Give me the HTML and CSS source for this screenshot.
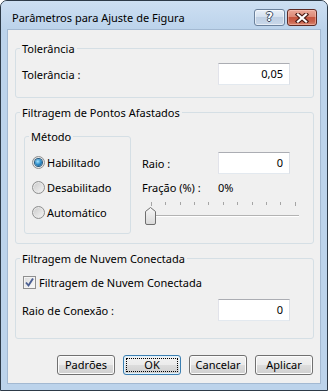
FILE: index.html
```html
<!DOCTYPE html>
<html>
<head>
	<title>Parâmetros para Ajuste de Figura</title>
	<link rel="stylesheet" href="styles.css">
</head>
<body>
	<div class="window">
		<div class="titlebar">
			<span class="title">Parâmetros para Ajuste de Figura</span>
			<div class="caption-buttons">
				<div class="cap-btn help"><span>?</span></div>
				<div class="cap-btn close">
					<svg width="14" height="10" viewBox="0 0 14 10">
						<path d="M3 1.5 L11 8.5 M11 1.5 L3 8.5" stroke="#4a1c16" stroke-width="4.4" stroke-linecap="square"/>
						<path d="M3 1.5 L11 8.5 M11 1.5 L3 8.5" stroke="#fff" stroke-width="2.2" stroke-linecap="square"/>
					</svg>
				</div>
			</div>
		</div>

		<div class="client">
			<fieldset class="group group-tol">
				<legend>Tolerância</legend>
				<div class="field-row first-row">
					<span>Tolerância :</span>
					<div class="textbox">0,05</div>
				</div>
			</fieldset>

			<fieldset class="group group-filter">
				<legend>Filtragem de Pontos Afastados</legend>
				<div class="filter-body">
					<fieldset class="group method">
						<legend>Método</legend>
						<div class="radio-list">
							<div class="radio-row"><span class="radio checked"></span>Habilitado</div>
							<div class="radio-row"><span class="radio"></span>Desabilitado</div>
							<div class="radio-row"><span class="radio"></span>Automático</div>
						</div>
					</fieldset>
					<div class="filter-params">
						<div class="field-row">
							<span>Raio :</span>
							<div class="textbox">0</div>
						</div>
						<div class="fraction-row">
							<span class="fraction-label">Fração (%) :</span>
							<span>0%</span>
						</div>
						<svg class="slider" width="160" height="27" viewBox="0 0 160 27">
							<defs>
								<linearGradient id="thumbFill" x1="0" y1="0" x2="0" y2="1">
									<stop offset="0" stop-color="#f8f8f8"/>
									<stop offset="1" stop-color="#d9d9d9"/>
								</linearGradient>
							</defs>
							<g stroke="#a5a5a5" stroke-width="1">
								<line x1="9.5" y1="3" x2="9.5" y2="7"/>
								<line x1="23.5" y1="3" x2="23.5" y2="6"/>
								<line x1="38.5" y1="3" x2="38.5" y2="6"/>
								<line x1="52.5" y1="3" x2="52.5" y2="6"/>
								<line x1="66.5" y1="3" x2="66.5" y2="6"/>
								<line x1="81.5" y1="3" x2="81.5" y2="6"/>
								<line x1="95.5" y1="3" x2="95.5" y2="6"/>
								<line x1="110.5" y1="3" x2="110.5" y2="6"/>
								<line x1="124.5" y1="3" x2="124.5" y2="6"/>
								<line x1="138.5" y1="3" x2="138.5" y2="6"/>
								<line x1="153.5" y1="3" x2="153.5" y2="7"/>
							</g>
							<line x1="9" y1="16.5" x2="157" y2="16.5" stroke="#b3b3b3"/>
							<line x1="9" y1="17.5" x2="157" y2="17.5" stroke="#ffffff"/>
							<path d="M3.5 12.5 L8.5 8.5 L13.5 12.5 V24 Q13.5 25.5 12 25.5 H5 Q3.5 25.5 3.5 24 Z" fill="url(#thumbFill)" stroke="#6f6f6f"/>
						</svg>
					</div>
				</div>
			</fieldset>

			<fieldset class="group group-cloud">
				<legend>Filtragem de Nuvem Conectada</legend>
				<div class="check-row">
					<span class="checkbox">
						<svg width="11" height="11" viewBox="0 0 11 11">
							<path d="M2 5.5 L4.5 8.5 L9 1.5" fill="none" stroke="#4b5f92" stroke-width="1.9"/>
						</svg>
					</span>
					Filtragem de Nuvem Conectada
				</div>
				<div class="field-row conn-row">
					<span>Raio de Conexão :</span>
					<div class="textbox">0</div>
				</div>
			</fieldset>

			<div class="button-row">
				<div class="btn">Padrões</div>
				<div class="btn default"><span class="focus">OK</span></div>
				<div class="btn">Cancelar</div>
				<div class="btn">Aplicar</div>
			</div>
		</div>
	</div>
</body>
</html>
```

FILE: styles.css
```css
/* Windows 7 basic dialog */
* {
	margin: 0;
	padding: 0;
	box-sizing: border-box;
}
body {
	background-color: #fff;
	font-family: "Noto Sans", "Open Sans", sans-serif;
	font-size: 11px;
	color: #000;
}
.window {
	width: 328px;
	height: 391px;
	border: 1px solid #2d3a48;
	border-radius: 7px 7px 0 0;
	background-color: #bcd3eb;
	display: flex;
	flex-direction: column;
}
.titlebar {
	height: 28px;
	display: flex;
	align-items: flex-start;
	background: linear-gradient(#cddff2, #bcd3eb);
	border-radius: 6px 6px 0 0;
}
.title {
	margin: 9px 0 0 11px;
	line-height: 16px;
}
.caption-buttons {
	display: flex;
	gap: 2px;
	margin: 8px 10px 0 auto;
}
.cap-btn {
	height: 17px;
	border-radius: 3px;
	display: flex;
	align-items: center;
	justify-content: center;
}
.help {
	width: 31px;
	border: 1px solid #6b819c;
	background: linear-gradient(#e8eff8, #d5e1ef 45%, #bfcfe3 50%, #c9d8ea);
	box-shadow: inset 0 0 0 1px rgba(255, 255, 255, 0.55);
}
.help span {
	font: bold 12px "DejaVu Sans", sans-serif;
	line-height: 13px;
	color: #fff;
	text-shadow: 1px 0 #3b4b60, -1px 0 #3b4b60, 0 1px #3b4b60, 0 -1px #3b4b60;
}
.close {
	width: 30px;
	border: 1px solid #5e2a24;
	background: linear-gradient(#eaa898, #dc8a78 45%, #c65640 50%, #c9604a 75%, #d98670);
	box-shadow: inset 0 0 0 1px rgba(255, 210, 200, 0.45);
}
.client {
	flex: 1;
	margin: 0 6px 6px;
	border: 1px solid #a3b9d2;
	background-color: #f0f0f0;
	padding: 11px 6px 8px 7px;
	display: flex;
	flex-direction: column;
}
.group {
	border: 1px solid #d5dfe5;
	border-radius: 3px;
	padding: 0 23px 0 4px;
	min-width: 0;
}
.group legend {
	padding: 0 2px;
	line-height: 15px;
}
.group-tol {
	height: 57px;
}
.group-filter {
	height: 139px;
	margin-top: 7px;
}
.group-cloud {
	height: 88px;
	margin-top: 7px;
}
.field-row {
	display: flex;
	align-items: center;
	justify-content: space-between;
	padding-left: 2px;
}
.first-row {
	margin-top: 7px;
}
.textbox {
	width: 72px;
	height: 22px;
	border: 1px solid;
	border-color: #abadb3 #dbdfe6 #e3e9ef #e2e3ea;
	background-color: #fff;
	text-align: right;
	padding-right: 6px;
	line-height: 20px;
}
.filter-body {
	display: flex;
}
.method {
	flex: none;
	width: 107px;
	height: 105px;
	margin: 9px 0 0 4px;
	padding: 0 4px;
}
.radio-list {
	padding: 6px 0 0 3px;
}
.radio-row {
	height: 25px;
	display: flex;
	align-items: center;
}
.radio {
	width: 13px;
	height: 13px;
	margin-right: 2px;
	border-radius: 50%;
	border: 1px solid #8e8f8f;
	background: linear-gradient(135deg, #c9c9c9, #f6f6f6);
	box-shadow: inset 0 0 0 1px #e8e8e8;
	position: relative;
}
.radio.checked::after {
	content: "";
	position: absolute;
	left: 2px;
	top: 2px;
	width: 7px;
	height: 7px;
	border-radius: 50%;
	background: radial-gradient(circle at 40% 35%, #a6e4ff, #2b8cc9 50%, #0f4a7a);
	box-shadow: 0 0 0 1px #25597f;
}
.filter-params {
	flex: 1;
	min-width: 0;
	margin-left: 11px;
	padding-top: 32px;
}
.filter-params .field-row {
	padding-left: 0;
}
.fraction-row {
	display: flex;
	margin-top: 7px;
	line-height: 14px;
}
.fraction-label {
	width: 76px;
}
.slider {
	display: block;
	margin-top: 4px;
	overflow: visible;
}
.check-row {
	display: flex;
	align-items: center;
	margin-top: 9px;
	padding-left: 3px;
	line-height: 15px;
}
.checkbox {
	width: 13px;
	height: 13px;
	margin-right: 3px;
	border: 1px solid #8f8f8f;
	background: linear-gradient(135deg, #dcdcdc, #fbfbfb);
	box-shadow: inset 0 0 0 1px #f4f4f4;
	display: flex;
}
.conn-row {
	margin-top: 9px;
}
.button-row {
	display: flex;
	justify-content: flex-end;
	gap: 8px;
	margin-top: 16px;
	padding-right: 1px;
}
.btn {
	width: 58px;
	height: 20px;
	border: 1px solid #707070;
	border-radius: 3px;
	background: linear-gradient(#f2f2f2, #ebebeb 50%, #dddddd 50%, #cfcfcf);
	box-shadow: inset 0 0 0 1px #fcfcfc;
	display: flex;
	align-items: center;
	justify-content: center;
	line-height: 16px;
}
.btn.default {
	border-color: #3c7fb1;
	box-shadow: inset 0 0 0 1px #dff2fd;
	padding: 2px;
}
.focus {
	flex: 1;
	align-self: stretch;
	border: 1px dotted #000;
	text-align: center;
	line-height: 12px;
}
```
